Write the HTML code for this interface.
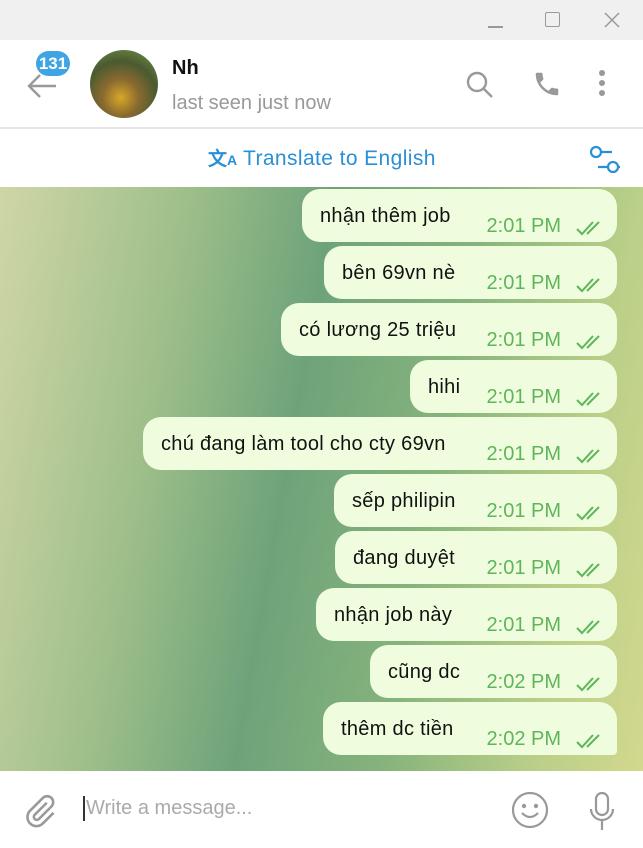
<!DOCTYPE html>
<html><head><meta charset="utf-8"><style>
*{margin:0;padding:0;box-sizing:border-box}
body{width:643px;height:848px;overflow:hidden;font-family:"Liberation Sans","DejaVu Sans",sans-serif;background:#fff;position:relative}
.tb{position:absolute;top:0;left:0;width:643px;height:40px;background:#f0f0f0}
.hd{position:absolute;top:40px;left:0;width:643px;height:89px;background:#fff;border-bottom:2px solid #e6e6e6}
.tr{position:absolute;top:131px;left:0;width:643px;height:56px;background:#fff}
.chat{position:absolute;top:187px;left:0;width:643px;height:584px;background:linear-gradient(100deg,#cfd6a6 0%,#9fbf8a 25%,#6ea37a 45%,#86b37c 65%,#b9cf88 85%,#d3d88e 100%)}
.inp{position:absolute;top:771px;left:0;width:643px;height:77px;background:#fff}
.b{position:absolute;right:26px;height:53px;background:#effdde;border-radius:18px;font-size:20px;color:#111}
.b .t{position:absolute;left:18px;top:16px;white-space:nowrap;letter-spacing:0.3px}
.b .tm{position:absolute;right:56px;top:26px;color:#5fb55a;font-size:20px;white-space:nowrap}
.b svg{position:absolute;right:10px;top:31px}
</style></head><body>
<div class="tb">
<div style="position:absolute;left:488px;top:26px;width:15px;height:1.5px;background:#999"></div>
<div style="position:absolute;left:545px;top:12px;width:15px;height:15px;border:1.5px solid #999;border-radius:2px"></div>
<svg style="position:absolute;left:604px;top:12px" width="16" height="16"><path d="M1 1L15 15M15 1L1 15" stroke="#999" stroke-width="1.5"/></svg>
</div>
<div class="hd">
<svg style="position:absolute;left:26px;top:33px" width="32" height="26"><path d="M30 13H4M14 2L3 13L14 24" stroke="#999" stroke-width="2.4" fill="none"/></svg>
<div style="position:absolute;left:36px;top:11px;width:34px;height:25px;border-radius:13px;background:#3fa4e4;color:#fff;font-size:17px;font-weight:bold;text-align:center;line-height:25px">131</div>
<div style="position:absolute;left:90px;top:10px;width:68px;height:68px;border-radius:50%;background:radial-gradient(circle at 45% 70%,#d8a828 0%,#8a6a30 30%,#4a5a30 60%,#7a9a50 100%)"></div>
<div style="position:absolute;left:172px;top:17px;font-size:20px;font-weight:bold;color:#111">Nh</div>
<div style="position:absolute;left:172px;top:52px;font-size:20px;color:#999">last seen just now</div>
<svg style="position:absolute;left:465px;top:30px" width="30" height="30"><circle cx="12" cy="12" r="9" stroke="#999" stroke-width="2.4" fill="none"/><path d="M19 19L27 27" stroke="#999" stroke-width="2.4"/></svg>
<svg style="position:absolute;left:532px;top:29px" width="30" height="30" viewBox="0 0 24 24"><path d="M6.6 10.8c1.4 2.8 3.8 5.1 6.6 6.6l2.2-2.2c.3-.3.7-.4 1-.2 1.1.4 2.3.6 3.6.6.6 0 1 .4 1 1V20c0 .6-.4 1-1 1C10.6 21 3 13.4 3 4c0-.6.4-1 1-1h3.5c.6 0 1 .4 1 1 0 1.3.2 2.5.6 3.6.1.3 0 .7-.2 1L6.6 10.8z" fill="#999"/></svg>
<div style="position:absolute;left:599px;top:30px;width:6px;height:6px;border-radius:3px;background:#999;box-shadow:0 10px 0 #999,0 20px 0 #999"></div>
</div>
<div class="tr">
<div style="position:absolute;left:208px;top:13px;color:#2a8fd6;font-size:19px;font-weight:bold">文<span style="font-size:14px">A</span></div>
<div style="position:absolute;left:243px;top:16px;color:#2a8fd6;font-size:21px;letter-spacing:0.4px">Translate to English</div>
<svg style="position:absolute;left:588px;top:14px" width="34" height="30"><path d="M2 7H24M10 22H32" stroke="#2a8fd6" stroke-width="2.2"/><circle cx="8" cy="7" r="5" fill="#fff" stroke="#2a8fd6" stroke-width="2.2"/><circle cx="25" cy="22" r="5" fill="#fff" stroke="#2a8fd6" stroke-width="2.2"/></svg>
</div>
<div class="chat">
<div class="b" style="top:2px;left:302px"><span class="t">nhận thêm job</span><span class="tm">2:01 PM</span><svg width="32" height="16"><path d="M2 9l5 5L18 2M12 14L24 2" stroke="#5fb55a" stroke-width="2" fill="none"/></svg></div>
<div class="b" style="top:59px;left:324px"><span class="t">bên 69vn nè</span><span class="tm">2:01 PM</span><svg width="32" height="16"><path d="M2 9l5 5L18 2M12 14L24 2" stroke="#5fb55a" stroke-width="2" fill="none"/></svg></div>
<div class="b" style="top:116px;left:281px"><span class="t">có lương 25 triệu</span><span class="tm">2:01 PM</span><svg width="32" height="16"><path d="M2 9l5 5L18 2M12 14L24 2" stroke="#5fb55a" stroke-width="2" fill="none"/></svg></div>
<div class="b" style="top:173px;left:410px"><span class="t">hihi</span><span class="tm">2:01 PM</span><svg width="32" height="16"><path d="M2 9l5 5L18 2M12 14L24 2" stroke="#5fb55a" stroke-width="2" fill="none"/></svg></div>
<div class="b" style="top:230px;left:143px"><span class="t">chú đang làm tool cho cty 69vn</span><span class="tm">2:01 PM</span><svg width="32" height="16"><path d="M2 9l5 5L18 2M12 14L24 2" stroke="#5fb55a" stroke-width="2" fill="none"/></svg></div>
<div class="b" style="top:287px;left:334px"><span class="t">sếp philipin</span><span class="tm">2:01 PM</span><svg width="32" height="16"><path d="M2 9l5 5L18 2M12 14L24 2" stroke="#5fb55a" stroke-width="2" fill="none"/></svg></div>
<div class="b" style="top:344px;left:335px"><span class="t">đang duyệt</span><span class="tm">2:01 PM</span><svg width="32" height="16"><path d="M2 9l5 5L18 2M12 14L24 2" stroke="#5fb55a" stroke-width="2" fill="none"/></svg></div>
<div class="b" style="top:401px;left:316px"><span class="t">nhận job này</span><span class="tm">2:01 PM</span><svg width="32" height="16"><path d="M2 9l5 5L18 2M12 14L24 2" stroke="#5fb55a" stroke-width="2" fill="none"/></svg></div>
<div class="b" style="top:458px;left:370px"><span class="t">cũng dc</span><span class="tm">2:02 PM</span><svg width="32" height="16"><path d="M2 9l5 5L18 2M12 14L24 2" stroke="#5fb55a" stroke-width="2" fill="none"/></svg></div>
<div class="b" style="top:515px;left:323px;border-bottom-right-radius:4px"><span class="t">thêm dc tiền</span><span class="tm">2:02 PM</span><svg width="32" height="16"><path d="M2 9l5 5L18 2M12 14L24 2" stroke="#5fb55a" stroke-width="2" fill="none"/></svg></div>
</div>
<div class="inp">
<svg style="position:absolute;left:22px;top:20px" width="36" height="40" viewBox="0 0 24 24"><path d="M16.5 6.5l-8.2 8.2a2 2 0 0 0 2.8 2.8l8.5-8.5a4 4 0 0 0-5.7-5.7L5.4 11.8a6 6 0 0 0 8.5 8.5l7.1-7.1" stroke="#999" stroke-width="1.7" fill="none"/></svg>
<div style="position:absolute;left:83px;top:25px;width:1.5px;height:25px;background:#333"></div>
<div style="position:absolute;left:86px;top:26px;font-size:20px;color:#aaa">Write a message...</div>
<svg style="position:absolute;left:511px;top:20px" width="38" height="38"><circle cx="19" cy="19" r="17" stroke="#999" stroke-width="2.2" fill="none"/><circle cx="13" cy="15" r="2.2" fill="#999"/><circle cx="25" cy="15" r="2.2" fill="#999"/><path d="M11 22q8 8 16 0" stroke="#999" stroke-width="2.2" fill="none"/></svg>
<svg style="position:absolute;left:587px;top:20px" width="32" height="42"><rect x="9" y="2" width="12" height="22" rx="6" stroke="#999" stroke-width="2.2" fill="none"/><path d="M4 18a11 11 0 0 0 22 0M15 29v10" stroke="#999" stroke-width="2.2" fill="none"/></svg>
</div>
</body></html>
